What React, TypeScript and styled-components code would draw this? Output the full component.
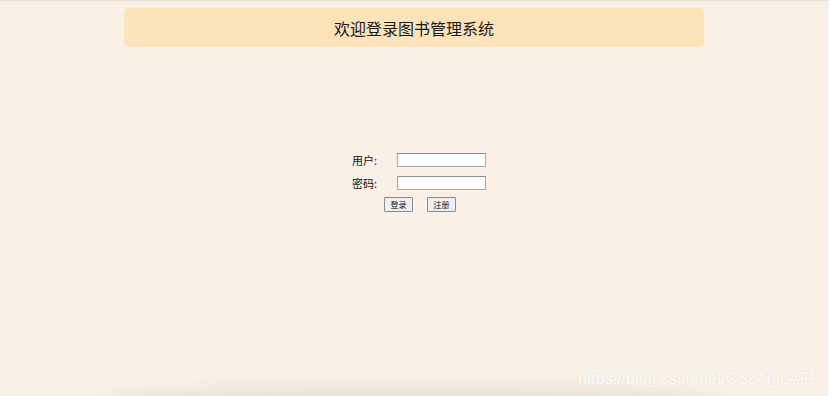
import styled, { createGlobalStyle } from 'styled-components';

const GlobalStyle = createGlobalStyle`
  html, body {
    margin: 0;
    padding: 0;
    background: #faf0e6;
    font-family: "Noto Sans CJK SC", "Noto Sans", sans-serif;
  }
`;

const Page = styled.div`
  position: relative;
  width: 830px;
  height: 396px;
  overflow: hidden;
  box-sizing: border-box;
  border-top: 1px solid #e4e0dc;
  border-right: 2px solid #fdfaf7;
  padding-top: 7px;
`;

const Header = styled.div`
  width: 580px;
  height: 39px;
  margin: 0 0 0 124px;
  background: #fde3b8;
  border-radius: 5px;
  display: flex;
  align-items: center;
  justify-content: center;
  font-size: 16px;
  color: #1a1a1a;
`;

const Form = styled.form`
  margin: 106px 0 0 0;
  display: flex;
  flex-direction: column;
  align-items: flex-start;
  gap: 9px;
  padding-left: 352px;
`;

const Row = styled.div`
  display: flex;
  align-items: center;
  height: 14px;
`;

const Label = styled.label`
  width: 45px;
  font-size: 11px;
  color: #111;
`;

const Input = styled.input`
  width: 89px;
  height: 14px;
  box-sizing: border-box;
  border: 1px solid #a9a5a2;
  border-top-color: #8f8b88;
  background: #fff;
  padding: 0 2px;
  font-size: 9px;
`;

const Buttons = styled.div`
  display: flex;
  gap: 14px;
  margin: -2px 0 0 32px;
`;

const Button = styled.button`
  width: 29px;
  height: 15px;
  box-sizing: border-box;
  padding: 0;
  font-family: "Noto Sans CJK SC", sans-serif;
  font-size: 8px;
  line-height: 1;
  color: #111;
  background: #efefef;
  border: 1px solid #8a8a8a;
  border-radius: 1px;
`;

const Shade = styled.div`
  position: absolute;
  left: 100px;
  right: 100px;
  bottom: -22px;
  height: 30px;
  border-radius: 50%;
  background: rgba(200, 190, 180, 0.35);
  filter: blur(8px);
`;

const Watermark = styled.div`
  position: absolute;
  right: 9px;
  bottom: 8px;
  font-family: "Liberation Sans", Arial, sans-serif;
  font-size: 16px;
  color: #ffffff;
  text-shadow: 0 0 1px rgba(150, 140, 130, 0.35);
`;

export default function App() {
  return (
    <>
      <GlobalStyle />
      <Page>
        <Header>欢迎登录图书管理系统</Header>
        <Form onSubmit={(e) => e.preventDefault()}>
          <Row>
            <Label>用户:</Label>
            <Input type="text" />
          </Row>
          <Row>
            <Label>密码:</Label>
            <Input type="password" />
          </Row>
          <Buttons>
            <Button type="submit">登录</Button>
            <Button type="button">注册</Button>
          </Buttons>
        </Form>
        <Shade />
        <Watermark>https://blog.csdn.net/CSDN_LAFF</Watermark>
      </Page>
    </>
  );
}
